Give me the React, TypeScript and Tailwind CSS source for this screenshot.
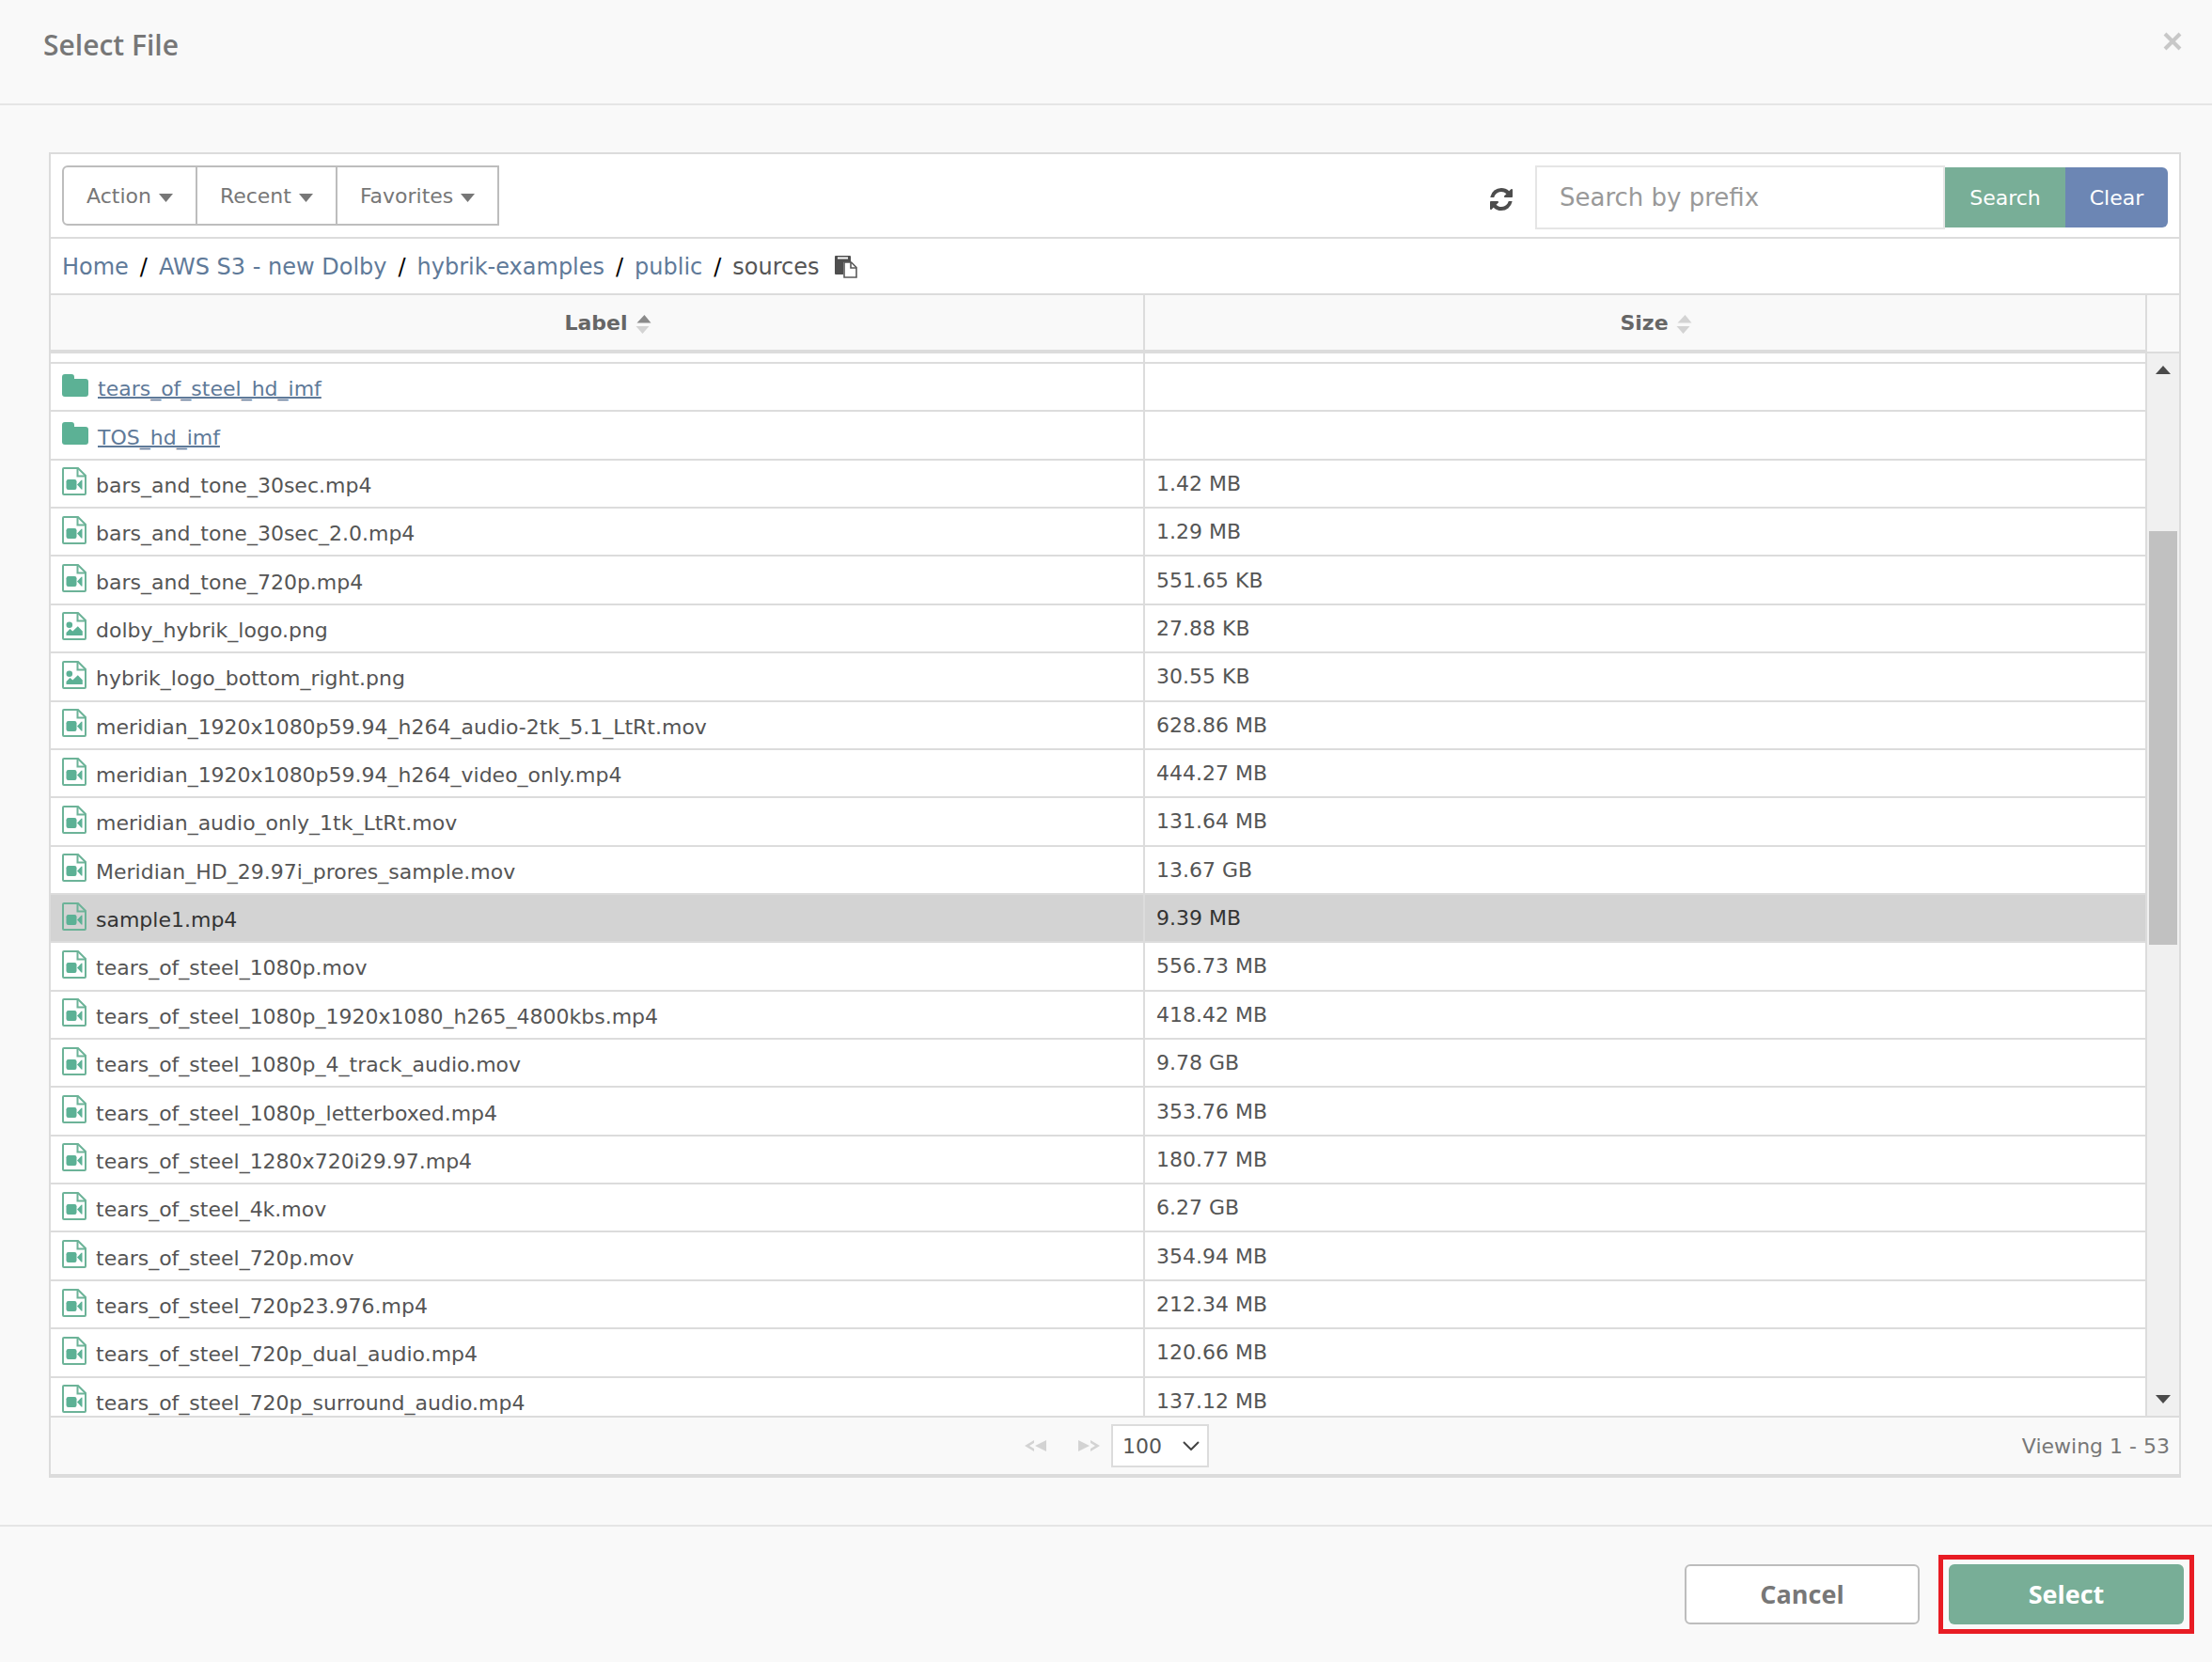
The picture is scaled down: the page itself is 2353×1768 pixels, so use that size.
import React from "react";

type Kind = "folder" | "video" | "image";
type Entry = { name: string; size: string; kind: Kind; selected?: boolean };

const entries: Entry[] = [
  { name: "tears_of_steel_hd_imf", size: "", kind: "folder" },
  { name: "TOS_hd_imf", size: "", kind: "folder" },
  { name: "bars_and_tone_30sec.mp4", size: "1.42 MB", kind: "video" },
  { name: "bars_and_tone_30sec_2.0.mp4", size: "1.29 MB", kind: "video" },
  { name: "bars_and_tone_720p.mp4", size: "551.65 KB", kind: "video" },
  { name: "dolby_hybrik_logo.png", size: "27.88 KB", kind: "image" },
  { name: "hybrik_logo_bottom_right.png", size: "30.55 KB", kind: "image" },
  { name: "meridian_1920x1080p59.94_h264_audio-2tk_5.1_LtRt.mov", size: "628.86 MB", kind: "video" },
  { name: "meridian_1920x1080p59.94_h264_video_only.mp4", size: "444.27 MB", kind: "video" },
  { name: "meridian_audio_only_1tk_LtRt.mov", size: "131.64 MB", kind: "video" },
  { name: "Meridian_HD_29.97i_prores_sample.mov", size: "13.67 GB", kind: "video" },
  { name: "sample1.mp4", size: "9.39 MB", kind: "video", selected: true },
  { name: "tears_of_steel_1080p.mov", size: "556.73 MB", kind: "video" },
  { name: "tears_of_steel_1080p_1920x1080_h265_4800kbs.mp4", size: "418.42 MB", kind: "video" },
  { name: "tears_of_steel_1080p_4_track_audio.mov", size: "9.78 GB", kind: "video" },
  { name: "tears_of_steel_1080p_letterboxed.mp4", size: "353.76 MB", kind: "video" },
  { name: "tears_of_steel_1280x720i29.97.mp4", size: "180.77 MB", kind: "video" },
  { name: "tears_of_steel_4k.mov", size: "6.27 GB", kind: "video" },
  { name: "tears_of_steel_720p.mov", size: "354.94 MB", kind: "video" },
  { name: "tears_of_steel_720p23.976.mp4", size: "212.34 MB", kind: "video" },
  { name: "tears_of_steel_720p_dual_audio.mp4", size: "120.66 MB", kind: "video" },
  { name: "tears_of_steel_720p_surround_audio.mp4", size: "137.12 MB", kind: "video" },
];

function FolderIcon() {
  return (
    <svg width="28" height="24" viewBox="0 0 28 24" fill="#5cb195" aria-hidden="true" className="mb-1 shrink-0">
      <path d="M3 0h7a3 3 0 0 1 3 3v2h12a3 3 0 0 1 3 3v13a3 3 0 0 1-3 3H3a3 3 0 0 1-3-3V3a3 3 0 0 1 3-3z" />
    </svg>
  );
}

function FileIcon({ kind }: { kind: Kind }) {
  return (
    <svg width="26" height="30" viewBox="0 0 26 30" fill="none" stroke="#6cb398" strokeWidth="2" aria-hidden="true" className="mb-1 shrink-0">
      <path d="M2 1h15l8 8v19a1 1 0 0 1-1 1H2a1 1 0 0 1-1-1V2a1 1 0 0 1 1-1z" />
      <path d="M16.500 1v8.500H25" />
      {kind === "video" ? (
        <g fill="#5cb195" stroke="none">
          <rect x="4.500" y="13" width="11" height="11" rx="2.200" />
          <path d="M16 18.500l4.500-4.800q1-.8 1 .4v9q0 1.200-1 .3z" />
        </g>
      ) : (
        <g fill="#5cb195" stroke="none">
          <circle cx="7.800" cy="13.800" r="3.300" />
          <path d="M4.500 25v-3l4-4 2.800 2.400 5.500-5.200 5 5.300V25z" />
        </g>
      )}
    </svg>
  );
}

function Caret() {
  return (
    <svg width="15" height="9" viewBox="0 0 15 9" fill="#777" aria-hidden="true" className="mt-1">
      <path d="M0 0h15L7.500 9z" />
    </svg>
  );
}

function SortIcon({ active }: { active?: boolean }) {
  return (
    <svg width="18" height="22" viewBox="0 0 18 22" aria-hidden="true" className="mt-1">
      <path d="M1.500 9.500h15L9.500 1z" fill={active ? "#8a8a8a" : "#d3d3d3"} />
      <path d="M.5 13h14L7.500 21z" fill="#d3d3d3" />
    </svg>
  );
}

function RefreshIcon() {
  return (
    <svg width="24" height="24" viewBox="0 0 1536 1536" fill="#4d4d4d" aria-hidden="true">
      <path d="M1511 928q0 5-1 7-64 268-268 434.500T764 1536q-146 0-282.500-55T238 1324l-129 129q-19 19-45 19t-45-19-19-45V960q0-26 19-45t45-19h448q26 0 45 19t19 45-19 45l-137 137q71 66 161 102t187 36q134 0 250-65t186-179q11-17 53-117 8-23 30-23h192q13 0 22.500 9.500t9.500 22.500zm25-800v448q0 26-19 45t-45 19h-448q-26 0-45-19t-19-45 19-45l138-138Q969 256 768 256q-134 0-250 65T332 500q-11 17-53 117-8 23-30 23H50q-13 0-22.500-9.500T18 608v-7q65-268 270-434.500T768 0q146 0 284 55.500T1297 212l130-129q19-19 45-19t45 19 19 45z" />
    </svg>
  );
}

function PasteIcon() {
  return (
    <svg width="26" height="26" viewBox="0 0 26 26" fill="none" aria-hidden="true">
      <path d="M2 1h15a1 1 0 0 1 1 1v6h-8v13H2a1 1 0 0 1-1-1V2a1 1 0 0 1 1-1z" fill="#4f4f4f" />
      <path d="M4 3.500h11" stroke="#fff" strokeWidth="2" />
      <path d="M11 8h7.500l5.500 5.500V24H11z" fill="#fff" stroke="#5a5a5a" strokeWidth="1.600" />
      <path d="M18 8v6h6" stroke="#5a5a5a" strokeWidth="1.600" />
    </svg>
  );
}

const crumbs = ["Home", "AWS S3 - new Dolby", "hybrik-examples", "public"];

export default function App() {
  return (
    <div className="flex min-h-screen flex-col bg-[#f9f9f9] font-['DejaVu_Sans',Verdana,sans-serif] text-[#555]">
      <header className="flex h-[112px] items-start justify-between border-b-2 border-[#e5e5e5] pl-[46px] pr-8 pt-7">
        <h1 className="font-['Open_Sans',sans-serif] text-[30px] font-semibold leading-10 text-[#777]">Select File</h1>
        <button type="button" aria-label="Close" className="mt-1.5 flex h-5 w-5 items-center justify-center">
          <svg width="20" height="20" viewBox="0 0 20 20" stroke="#c8c8c8" strokeWidth="4" aria-hidden="true">
            <path d="M2 2l16 16M18 2L2 18" />
          </svg>
        </button>
      </header>

      <main className="flex-1 pb-[50px] pl-[52px] pr-[33px] pt-[50px]">
        <section className="border-2 border-b-4 border-[#dcdcdc] bg-white">
          <div className="flex h-[90px] items-start justify-between border-b-2 border-[#dcdcdc] px-3">
            <div className="mt-3 flex h-16 text-[22px] text-[#777]">
              {["Action", "Recent", "Favorites"].map((label) => (
                <button
                  key={label}
                  type="button"
                  className="-mr-0.5 flex items-center gap-2 border-2 border-[#bdbdbd] bg-white px-6 first:rounded-l-md"
                >
                  {label}
                  <Caret />
                </button>
              ))}
            </div>
            <div className="mt-3 flex items-center">
              <button type="button" aria-label="Refresh" className="mr-6 mt-1">
                <RefreshIcon />
              </button>
              <input
                type="text"
                aria-label="Search by prefix"
                placeholder="Search by prefix"
                className="h-[68px] w-[436px] border-2 border-[#e5e5e5] bg-white px-6 text-[26px] placeholder:text-[#999]"
              />
              <button type="button" className="h-16 w-32 bg-[#78ae97] text-[22px] text-white">
                Search
              </button>
              <button type="button" className="h-16 w-[109px] rounded-r-md bg-[#6c86b4] text-[22px] text-white">
                Clear
              </button>
            </div>
          </div>

          <nav aria-label="Breadcrumb" className="flex h-[60px] items-center border-b-2 border-[#dcdcdc] px-3 pt-0.5 text-[24px]">
            {crumbs.map((crumb) => (
              <React.Fragment key={crumb}>
                <a href="#" className="text-[#5f7a99]">{crumb}</a>
                <span className="w-8 text-center text-black">/</span>
              </React.Fragment>
            ))}
            <span>sources</span>
            <button type="button" aria-label="Copy path" className="ml-4">
              <PasteIcon />
            </button>
          </nav>

          <div className="flex">
            <div className="min-w-0 flex-1">
              <div className="h-[1192px] overflow-hidden">
                <table className="h-[1203px] w-full table-fixed border-collapse text-[22px]">
                  <thead>
                    <tr className="h-[60px] border-b-4 border-[#dcdcdc] bg-[#f9f9f9] text-[#666]">
                      <th scope="col" className="w-[1163px] border-r-2 border-[#dcdcdc] p-0 pl-6">
                        <span className="flex items-center justify-center gap-2">
                          Label <SortIcon active />
                        </span>
                      </th>
                      <th scope="col" className="p-0 pl-6">
                        <span className="flex items-center justify-center gap-2">
                          Size <SortIcon />
                        </span>
                      </th>
                    </tr>
                  </thead>
                  <tbody>
                    <tr className="h-3 border-b-2 border-[#dcdcdc]">
                      <td className="border-r-2 border-[#dcdcdc]" />
                      <td />
                    </tr>
                    {entries.map((entry) => (
                      <tr
                        key={entry.name}
                        className={
                          entry.selected
                            ? "border-b-2 border-[#dcdcdc] bg-[#d3d3d3] text-[#333]"
                            : "border-b-2 border-[#dcdcdc]"
                        }
                      >
                        <td className="border-r-2 border-[#dcdcdc] px-3 py-0">
                          <span className="flex items-center gap-2.5">
                            {entry.kind === "folder" ? <FolderIcon /> : <FileIcon kind={entry.kind} />}
                            {entry.kind === "folder" ? (
                              <a href="#" className="pt-1 text-[#5f7a99] underline decoration-2 [text-decoration-skip-ink:none]">
                                {entry.name}
                              </a>
                            ) : (
                              <span className="pt-1">{entry.name}</span>
                            )}
                          </span>
                        </td>
                        <td className="px-3 py-0">{entry.size}</td>
                      </tr>
                    ))}
                  </tbody>
                </table>
              </div>
            </div>
            <div className="flex w-9 flex-col border-l-2 border-[#dcdcdc] bg-[#f0f0f0]">
              <div className="h-[62px] border-b-2 border-[#dcdcdc] bg-[#f9f9f9]" />
              <svg width="34" height="36" viewBox="0 0 34 36" fill="#4a4a4a" aria-hidden="true">
                <path d="M9 22h16L17 13z" />
              </svg>
              <div className="mx-0.5 mt-[153px] h-[440px] bg-[#c1c1c1]" />
              <svg width="34" height="36" viewBox="0 0 34 36" fill="#4a4a4a" aria-hidden="true" className="mt-auto">
                <path d="M9 14h16L17 23z" />
              </svg>
            </div>
          </div>

          <footer className="grid h-[62px] grid-cols-3 items-center border-t-2 border-[#dcdcdc] bg-[#f9f9f9] px-2.5 text-[22px] text-[#777]">
            <div className="col-start-2 flex items-center justify-center pl-1">
              <button type="button" aria-label="Previous page" className="mr-8">
                <svg width="24" height="12" viewBox="0 0 24 12" fill="#d3d3d3" aria-hidden="true">
                  <path d="M23 0v12L11 6zM10 0L0 6l10 6V9L5 6l5-3z" />
                </svg>
              </button>
              <button type="button" aria-label="Next page" className="mr-3">
                <svg width="24" height="12" viewBox="0 0 24 12" fill="#d3d3d3" aria-hidden="true">
                  <path d="M1 0v12l12-6zM14 0l10 6-10 6V9l5-3-5-3z" />
                </svg>
              </button>
              <span className="grid">
                <select
                  aria-label="Rows per page"
                  className="col-start-1 row-start-1 h-[46px] w-[104px] appearance-none border-2 border-[#dcdcdc] bg-white pl-2.5 text-[#555]"
                  defaultValue="100"
                >
                  <option>100</option>
                  <option>50</option>
                </select>
                <svg width="18" height="10" viewBox="0 0 18 10" fill="none" stroke="#444" strokeWidth="2" aria-hidden="true" className="pointer-events-none col-start-1 row-start-1 mr-2.5 self-center justify-self-end">
                  <path d="M1 1l8 8 8-8" />
                </svg>
              </span>
            </div>
            <div className="text-right">Viewing 1 - 53</div>
          </footer>
        </section>
      </main>

      <div className="flex h-[147px] items-start justify-end gap-5 border-t-2 border-[#e5e5e5] pr-[19px] pt-[30px] font-['Open_Sans',sans-serif] text-[27px] font-bold">
        <button type="button" className="mt-2.5 h-16 w-[250px] rounded-md border-2 border-[#bdbdbd] bg-white text-[#777]">
          Cancel
        </button>
        <div className="border-[5px] border-[#e81c24] px-1.5 py-[5px]">
          <button type="button" className="block h-16 w-[250px] rounded-md bg-[#78ae97] text-white">
            Select
          </button>
        </div>
      </div>
    </div>
  );
}
